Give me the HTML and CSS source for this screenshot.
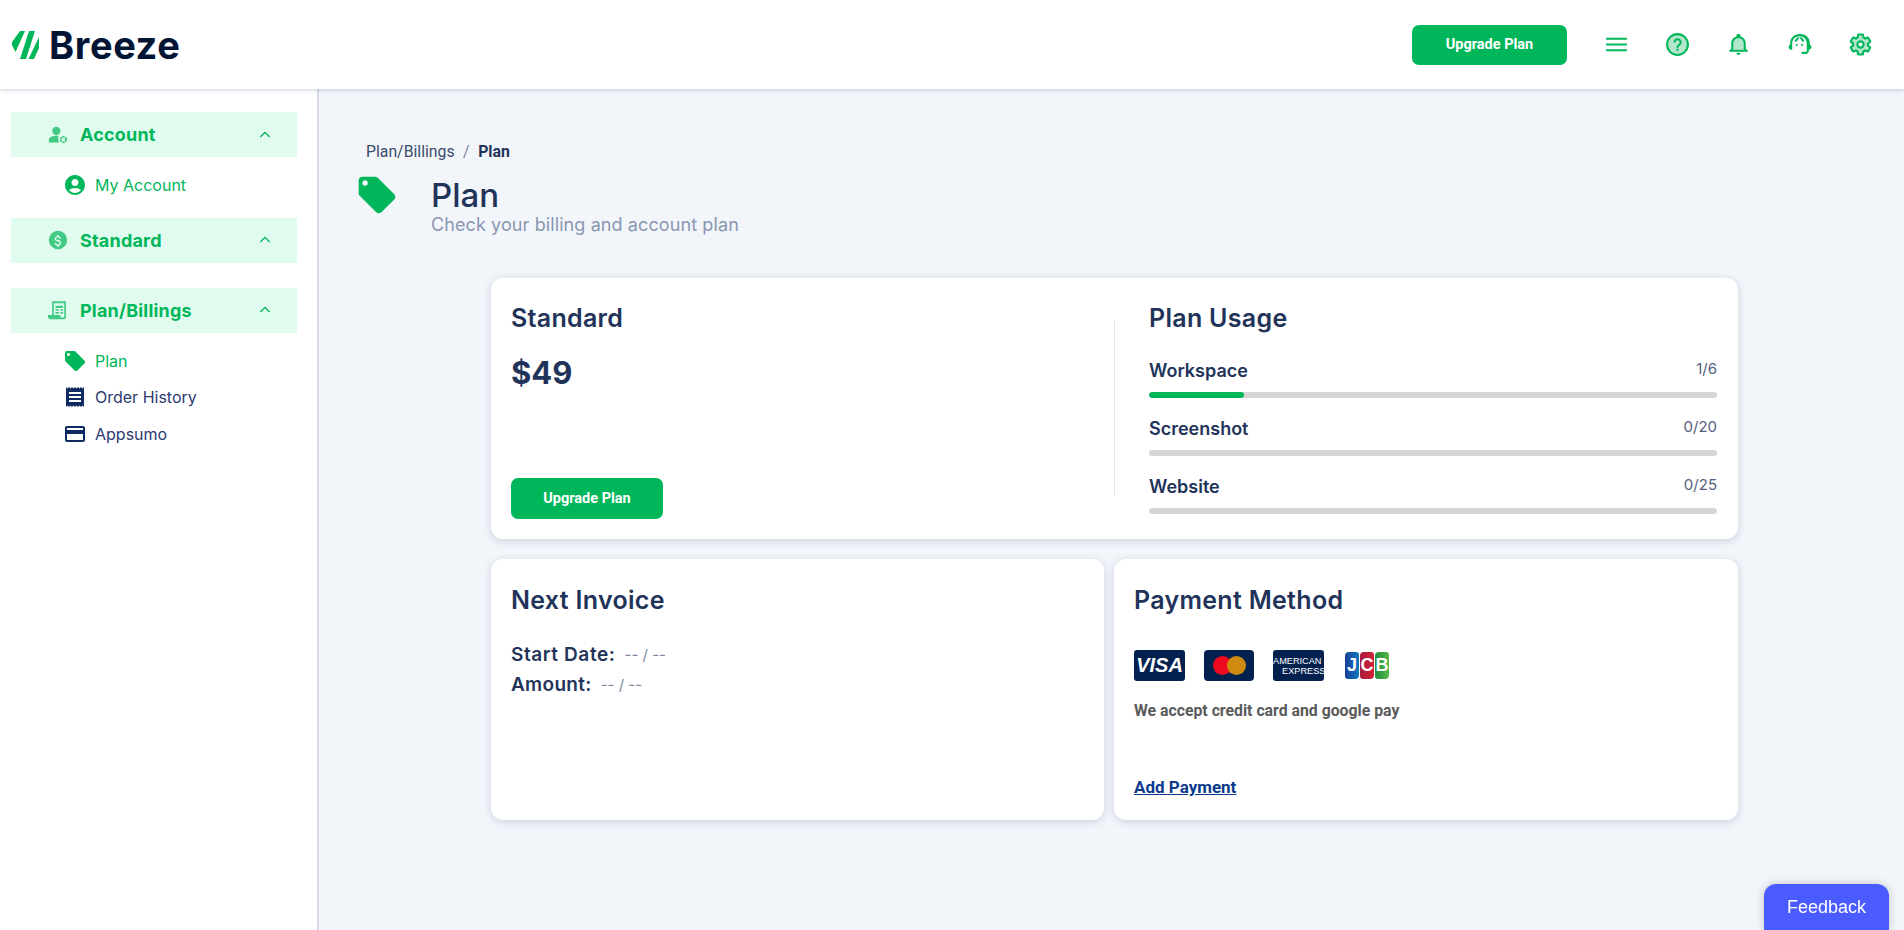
FILE: index.html
```html
<!DOCTYPE html>
<html lang="en">

<head>
    <meta charset="UTF-8">
    <meta name="viewport" content="width=device-width, initial-scale=1.0">
    <title>Breeze - Plan</title>
    <link rel="stylesheet" href="styles.css">
</head>

<body>
    <!-- top bar -->
    <header class="topbar">
        <div class="logo">
            <svg class="logo-mark" viewBox="0 0 27 28">
                <path d="M8 0h5L3.500 21 0 14v-3z" />
                <path d="M17 0h6L14 28H8z" />
                <path d="M27 6v11l-5 11h-5.500z" />
            </svg>
            <span class="logo-text">Breeze</span>
        </div>
        <div class="topbar-right">
            <a class="btn btn-top" href="#">Upgrade Plan</a>
            <div class="top-icons">
                <svg viewBox="0 0 24 24" class="top-icon">
                    <path d="M2 5.500h20v2H2zM2 11h20v2H2zM2 16.500h20v2H2z" />
                </svg>
                <svg viewBox="0 0 24 24" class="top-icon">
                    <circle cx="12" cy="12" r="10" class="soft" />
                    <path d="M12 1a11 11 0 1 0 0 22 11 11 0 0 0 0-22zm0 20a9 9 0 1 1 0-18 9 9 0 0 1 0 18z" />
                    <path d="M11 16h2v2h-2zM12 6a4 4 0 0 0-4 4h2a2 2 0 1 1 4 0c0 2-3 1.800-3 5h2c0-2.300 3-2.500 3-5a4 4 0 0 0-4-4z" />
                </svg>
                <svg viewBox="0 0 24 24" class="top-icon">
                    <path d="M6 17v-6c0-3.500 2.500-6 6-6s6 2.500 6 6v6z" class="soft" />
                    <path d="M12 22c1.100 0 2-.9 2-2h-4c0 1.100.9 2 2 2zm7-6v-5c0-3.300-1.900-6-5-6.800V3.500C14 2.500 13.100 2 12 2s-2 .5-2 1.500v.7C6.900 5 5 7.700 5 11v5l-2 2v1h18v-1zm-2 1H7v-6c0-2.900 2.200-5 5-5s5 2.100 5 5z" />
                </svg>
                <svg viewBox="0 0 24 24" class="top-icon">
                    <path d="M12 2C6.700 2 3 6 3 11v1.200C2 12.600 1.500 13.500 1.500 14.500c0 1.400 1 2.500 2.500 2.500h1v-6c0-4 3-7 7-7s7 3 7 7v7c0 .8-.5 1-1 1h-4v2h4c1.700 0 3-1.300 3-3v-1c1.500 0 2.500-1.100 2.500-2.500 0-1-.5-1.900-1.500-2.300V11c0-5-3.700-9-9-9z" />
                    <path d="M12 5l-2.500 4H7.500V8L10 5zM12 5l2.500 4h2V8L14 5z" />
                    <circle cx="9.500" cy="12.500" r="1" />
                    <circle cx="14.500" cy="12.500" r="1" />
                </svg>
                <svg viewBox="0 0 24 24" class="top-icon">
                    <path class="soft gear" d="M19.140 12.940c.04-.3.06-.61.06-.94 0-.32-.02-.64-.07-.94l2.030-1.580c.18-.14.23-.41.12-.61l-1.920-3.320c-.12-.22-.37-.29-.59-.22l-2.390.96c-.5-.38-1.030-.7-1.620-.94l-.36-2.540c-.04-.24-.24-.41-.48-.41h-3.840c-.24 0-.43.17-.47.41l-.36 2.540c-.59.24-1.130.57-1.620.94l-2.390-.96c-.22-.08-.47 0-.59.22L2.740 8.870c-.12.21-.08.47.12.61l2.030 1.580c-.05.3-.09.63-.09.94s.02.64.07.94l-2.030 1.580c-.18.14-.23.41-.12.61l1.920 3.320c.12.22.37.29.59.22l2.390-.96c.5.38 1.030.7 1.620.94l.36 2.540c.05.24.24.41.48.41h3.840c.24 0 .44-.17.47-.41l.36-2.540c.59-.24 1.130-.56 1.620-.94l2.390.96c.22.08.47 0 .59-.22l1.920-3.320c.12-.22.07-.47-.12-.61z" />
                    <circle class="gear-hole" cx="12" cy="12" r="3" />
                </svg>
            </div>
        </div>
    </header>

    <div class="layout">
        <!-- side menu -->
        <aside class="sidebar">
            <div class="menu-head">
                <svg viewBox="0 0 24 24" class="menu-head-icon">
                    <circle cx="10" cy="7" r="5" />
                    <path d="M1 21v-3c0-3 4-5 9-5 1 0 2 .1 2.500.2-.6 2.500-.2 5.800 1 7.800z" />
                    <circle cx="18.500" cy="17.500" r="3.200" fill="none" stroke="currentColor" stroke-width="2.400" stroke-dasharray="2.500 .9" />
                </svg>
                <span class="menu-title">Account</span>
                <svg viewBox="0 0 24 24" class="chevron"><path d="M5 15l7-7 7 7" /></svg>
            </div>
            <a class="menu-item active" href="#">
                <svg viewBox="0 0 24 24"><path d="M12 2C6.480 2 2 6.480 2 12s4.480 10 10 10 10-4.480 10-10S17.520 2 12 2zm0 4c1.930 0 3.500 1.570 3.500 3.500S13.930 13 12 13s-3.500-1.570-3.500-3.500S10.070 6 12 6zm0 14c-2.030 0-4.430-.82-6.140-2.880C7.550 15.800 9.680 15 12 15s4.450.8 6.140 2.120C16.430 19.180 14.030 20 12 20z" /></svg>
                My Account
            </a>

            <div class="menu-head menu-head-standard">
                <svg viewBox="0 0 24 24" class="menu-head-icon">
                    <path d="M12 1a11 11 0 1 0 0 22 11 11 0 0 0 0-22zm1 17.500V20h-2v-1.500c-1.700-.3-3-1.400-3.200-3h2c.2 1 1 1.500 2.300 1.500 1.400 0 2.100-.6 2.100-1.400 0-.8-.5-1.300-2.500-1.800-2.300-.6-3.700-1.400-3.700-3.300 0-1.500 1.300-2.600 3-3V6.100h2v1.500c1.700.4 2.600 1.700 2.700 3h-2c-.1-1-.7-1.600-2-1.600-1.300 0-2 .6-2 1.400 0 .7.6 1.200 2.500 1.700 2.100.5 3.700 1.300 3.700 3.300 0 1.600-1.200 2.700-2.900 3.100z" />
                </svg>
                <span class="menu-title">Standard</span>
                <svg viewBox="0 0 24 24" class="chevron"><path d="M5 15l7-7 7 7" /></svg>
            </div>

            <div class="menu-head menu-head-billing">
                <svg viewBox="0 0 24 24" class="menu-head-icon">
                    <path d="M5 1l1.500 1L8 1l1.500 1L11 1l1.500 1L14 1l1.500 1L17 1l1.500 1L20 1l1.500 1v18a3 3 0 0 1-3 3H2.500A2.500 2.500 0 0 1 0 20.500V18h5zm2 3v14h8v2.500c0 .2 0 .4.100.5h2.900c.6 0 1.500-.4 1.500-1V4zm2 3h9v2.500H9zm0 4h4v2H9zm6 0h3v2h-3zm-6 3.500h4v2H9zm6 0h3v2h-3z" fill-rule="evenodd" />
                </svg>
                <span class="menu-title">Plan/Billings</span>
                <svg viewBox="0 0 24 24" class="chevron"><path d="M5 15l7-7 7 7" /></svg>
            </div>
            <a class="menu-item active" href="#">
                <svg viewBox="0 0 24 24"><path d="M21.410 11.580l-9-9C12.050 2.220 11.550 2 11 2H4c-1.100 0-2 .9-2 2v7c0 .55.22 1.050.59 1.420l9 9c.36.36.86.58 1.410.58.55 0 1.050-.22 1.410-.59l7-7c.37-.36.59-.86.59-1.410 0-.55-.23-1.060-.59-1.420zM5.500 7C4.670 7 4 6.330 4 5.500S4.670 4 5.500 4 7 4.670 7 5.500 6.330 7 5.500 7z" /></svg>
                Plan
            </a>
            <a class="menu-item" href="#">
                <svg viewBox="0 0 24 24"><path d="M18 17H6v-2h12v2zm0-4H6v-2h12v2zm0-4H6V7h12v2zM3 22l1.500-1.500L6 22l1.500-1.500L9 22l1.500-1.500L12 22l1.500-1.500L15 22l1.500-1.500L18 22l1.500-1.500L21 22V2l-1.500 1.500L18 2l-1.500 1.500L15 2l-1.500 1.500L12 2l-1.500 1.500L9 2 7.500 3.500 6 2 4.500 3.500 3 2v20z" /></svg>
                Order History
            </a>
            <a class="menu-item" href="#">
                <svg viewBox="0 0 24 24"><path d="M20 4H4c-1.110 0-1.990.89-1.990 2L2 18c0 1.110.89 2 2 2h16c1.110 0 2-.89 2-2V6c0-1.110-.89-2-2-2zm0 14H4v-6h16v6zm0-10H4V6h16v2z" /></svg>
                Appsumo
            </a>
        </aside>

        <!-- page content -->
        <main class="content">
            <div class="crumbs">
                <span>Plan/Billings</span>
                <span class="crumb-sep">/</span>
                <b>Plan</b>
            </div>
            <div class="page-head">
                <svg viewBox="0 0 24 24" class="page-icon"><path d="M21.410 11.580l-9-9C12.050 2.220 11.550 2 11 2H4c-1.100 0-2 .9-2 2v7c0 .55.22 1.050.59 1.420l9 9c.36.36.86.58 1.410.58.55 0 1.050-.22 1.410-.59l7-7c.37-.36.59-.86.59-1.410 0-.55-.23-1.060-.59-1.420zM5.500 7C4.670 7 4 6.330 4 5.500S4.670 4 5.500 4 7 4.670 7 5.500 6.330 7 5.500 7z" /></svg>
                <div>
                    <h1>Plan</h1>
                    <p>Check your billing and account plan</p>
                </div>
            </div>

            <div class="cards">
                <section class="card card-plan">
                    <div class="plan-left">
                        <h2>Standard</h2>
                        <div class="price">$49</div>
                        <a class="btn btn-card" href="#">Upgrade Plan</a>
                    </div>
                    <div class="plan-right">
                        <h2>Plan Usage</h2>
                        <div class="usage">
                            <div class="usage-row"><span class="usage-name">Workspace</span><span class="usage-val">1/6</span></div>
                            <div class="bar"><div class="bar-fill" style="width: 16.670%"></div></div>
                        </div>
                        <div class="usage">
                            <div class="usage-row"><span class="usage-name">Screenshot</span><span class="usage-val">0/20</span></div>
                            <div class="bar"></div>
                        </div>
                        <div class="usage">
                            <div class="usage-row"><span class="usage-name">Website</span><span class="usage-val">0/25</span></div>
                            <div class="bar"></div>
                        </div>
                    </div>
                </section>

                <section class="card card-invoice">
                    <h2>Next Invoice</h2>
                    <div class="invoice-line invoice-first"><b>Start Date:</b><span>-- / --</span></div>
                    <div class="invoice-line"><b>Amount:</b><span>-- / --</span></div>
                </section>

                <section class="card card-pay">
                    <h2>Payment Method</h2>
                    <div class="pay-logos">
                        <div class="pay-logo visa">VISA</div>
                        <div class="pay-logo master"><i class="mc-red"></i><i class="mc-orange"></i></div>
                        <div class="pay-logo amex"><span>AMERICAN</span><span class="amex-2">EXPRESS</span></div>
                        <div class="jcb"><span class="jcb-j">J</span><span class="jcb-c">C</span><span class="jcb-b">B</span></div>
                    </div>
                    <p class="pay-note">We accept credit card and google pay</p>
                    <a class="pay-link" href="#">Add Payment</a>
                </section>
            </div>
        </main>
    </div>

    <a class="feedback" href="#">Feedback</a>
</body>

</html>
```

FILE: styles.css
```css
* {
    box-sizing: border-box;
}

html,
body {
    height: 100%;
}

body {
    margin: 0;
    background-color: #f2f5fa;
    color: #22335a;
    font-family: "Roboto", "Liberation Sans", sans-serif;
    overflow: hidden;
}

a {
    text-decoration: none;
}

h1,
h2,
p {
    margin: 0;
}

/* top bar */
.topbar {
    height: 89px;
    background-color: #fff;
    display: flex;
    align-items: center;
    justify-content: space-between;
    padding: 0 31px 0 12px;
    box-shadow: 0 1px 4px rgba(60, 70, 120, 0.25);
    position: relative;
    z-index: 2;
}

.logo {
    display: flex;
    align-items: center;
    gap: 10px;
}

.logo-mark {
    width: 27px;
    height: 28px;
    fill: #00b65a;
}

.logo-text {
    font-family: "Inter", sans-serif;
    font-size: 38px;
    font-weight: 700;
    color: #031535;
    letter-spacing: 0.6px;
}

.topbar-right {
    display: flex;
    align-items: center;
}

.btn {
    display: flex;
    align-items: center;
    justify-content: center;
    background-color: #00b65a;
    color: #fff;
    font-size: 14.500px;
    font-weight: 700;
    border-radius: 7px;
}

.btn-top {
    width: 155px;
    height: 40px;
}

.top-icons {
    display: flex;
    gap: 36px;
    margin-left: 37px;
}

.top-icon {
    width: 25px;
    height: 25px;
    fill: #00b65a;
}

.top-icon .soft {
    fill: #b2e7cc;
}

.top-icon .gear {
    stroke: #00b65a;
    stroke-width: 2;
}

.top-icon .gear-hole {
    fill: #fff;
    stroke: #00b65a;
    stroke-width: 2;
}

.layout {
    display: flex;
    height: calc(100% - 89px);
}

/* side menu */
.sidebar {
    width: 319px;
    flex-shrink: 0;
    background-color: #fff;
    border-right: 2px solid #d5d8e8;
    padding: 23px 20px 0 11px;
}

.menu-head {
    height: 45px;
    background-color: #e0fcee;
    color: #00b65a;
    display: flex;
    align-items: center;
    padding-left: 37px;
    margin-bottom: 10px;
}

.menu-head-standard {
    margin-top: 14px;
    margin-bottom: 25px;
}

.menu-head-billing {
    margin-bottom: 10px;
}

.menu-head-icon {
    width: 20px;
    height: 20px;
    fill: currentColor;
    opacity: 0.7;
    flex-shrink: 0;
    margin-right: 12px;
}

.menu-title {
    font-family: "Inter", sans-serif;
    font-size: 18px;
    font-weight: 700;
    letter-spacing: 0.2px;
    flex: 1;
}

.chevron {
    width: 16px;
    height: 16px;
    fill: none;
    stroke: #00b65a;
    stroke-width: 2;
    margin-right: 24px;
}

.menu-item {
    height: 36.500px;
    display: flex;
    align-items: center;
    padding-left: 52px;
    color: #2c3a72;
    font-family: "Inter", sans-serif;
    font-size: 16px;
}

.menu-item svg {
    width: 24px;
    height: 24px;
    fill: #0f2a60;
    margin-right: 8px;
}

.menu-item.active {
    color: #00b65a;
}

.menu-item.active svg {
    fill: #00b65a;
}

/* page content */
.content {
    flex: 1;
    padding: 53px 166px 0 47px;
}

.crumbs {
    font-size: 15.800px;
    color: #3d4b6c;
    height: 18px;
    display: flex;
    align-items: center;
}

.crumb-sep {
    margin: 0 8.500px;
    color: #7b869d;
}

.crumbs b {
    color: #22335a;
    font-weight: 700;
}

.page-head {
    display: flex;
    margin: 8px 0 0 -11px;
}

.page-icon {
    width: 44px;
    height: 44px;
    fill: #00b65a;
    margin: 5px 32px 0 0;
}

.page-head h1 {
    font-family: "Inter", sans-serif;
    font-size: 33px;
    font-weight: 500;
    line-height: 40px;
    margin-top: 7px;
}

.page-head p {
    font-family: "Inter", sans-serif;
    font-size: 18px;
    letter-spacing: 0.1px;
    line-height: 20px;
    color: #8a97b1;
}

.cards {
    display: grid;
    grid-template-columns: 613px 624px;
    grid-template-rows: 261px 261px;
    gap: 20px 10px;
    margin: 43px 0 0 125px;
}

.card {
    background-color: #fff;
    border-radius: 12px;
    box-shadow: 0 2px 8px rgba(60, 70, 120, 0.2);
    padding: 20px;
}

.card h2 {
    font-family: "Inter", sans-serif;
    font-size: 25px;
    font-weight: 600;
    letter-spacing: 0.3px;
    line-height: 40px;
}

.card-plan {
    grid-column: 1 / 3;
    display: flex;
    padding-right: 21px;
}

.card-invoice h2,
.card-pay h2 {
    margin-top: 1px;
}

.plan-left {
    width: 603px;
    display: flex;
    flex-direction: column;
    align-items: flex-start;
}

.price {
    font-family: "Inter", sans-serif;
    font-size: 31px;
    font-weight: 700;
    margin-top: 16px;
}

.btn-card {
    width: 152px;
    height: 41px;
    margin-top: auto;
}

.plan-right {
    flex: 1;
    position: relative;
    padding-left: 35px;
}

/* vertical line between plan and usage */
.plan-right::before {
    content: "";
    position: absolute;
    left: 0;
    top: 23px;
    height: 175px;
    border-left: 1px solid #e2e4e9;
}

.usage {
    margin-top: 18px;
}

.plan-right h2 + .usage {
    margin-top: 20px;
}

.usage-row {
    display: flex;
    justify-content: space-between;
    align-items: flex-start;
    height: 34px;
}

.usage-name {
    font-family: "Inter", sans-serif;
    font-size: 18px;
    font-weight: 600;
    line-height: 26px;
}

.usage-val {
    font-family: "Inter", sans-serif;
    font-size: 15px;
    line-height: 22px;
    color: #556180;
}

.bar {
    height: 6px;
    border-radius: 3px;
    background-color: #d6d6d6;
    overflow: hidden;
}

.bar-fill {
    height: 100%;
    border-radius: 3px;
    background-color: #00b65a;
}

.invoice-line {
    display: flex;
    gap: 9px;
    align-items: center;
    height: 30px;
    font-family: "Inter", sans-serif;
}

.invoice-first {
    margin-top: 19.500px;
}

.invoice-line b {
    font-size: 19px;
    font-weight: 600;
    letter-spacing: 0.3px;
}

.invoice-first b {
    letter-spacing: 0.6px;
}

.invoice-line span {
    font-size: 15px;
    color: #7c88a1;
}

.card-pay {
    display: flex;
    flex-direction: column;
    align-items: flex-start;
}

.pay-logos {
    display: flex;
    align-items: center;
    gap: 19px;
    margin-top: 30px;
}

.pay-logo {
    width: 51px;
    height: 31px;
    border-radius: 3px;
    background-color: #03214f;
    color: #fff;
    display: flex;
    align-items: center;
    justify-content: center;
}

.visa {
    font-family: "Liberation Sans", sans-serif;
    font-size: 20px;
    font-weight: 700;
    font-style: italic;
}

.master {
    width: 50px;
    border-radius: 4px;
}

.master i {
    width: 19px;
    height: 19px;
    border-radius: 50%;
}

.mc-red {
    background-color: #ee0a1e;
}

.mc-orange {
    background-color: #cf8a10;
    margin-left: -5px;
}

.amex {
    flex-direction: column;
    align-items: flex-start;
    font-family: "Liberation Sans", sans-serif;
    font-size: 9.200px;
    line-height: 10px;
    white-space: nowrap;
}

.amex-2 {
    margin-left: 9px;
}

.jcb {
    display: flex;
    gap: 1px;
    height: 27px;
    margin-left: 2px;
}

.jcb span {
    width: 14px;
    display: flex;
    align-items: center;
    justify-content: center;
    border-radius: 4px 3px;
    color: #fff;
    font-family: "Liberation Sans", sans-serif;
    font-size: 18px;
    font-weight: 700;
}

.jcb-j {
    background: linear-gradient(90deg, #1a3f94, #0f78c0);
}

.jcb-c {
    background: linear-gradient(90deg, #a81c3c, #d22138);
}

.jcb-b {
    background: linear-gradient(90deg, #1d8f3e, #58b947);
}

.pay-note {
    font-size: 15.800px;
    font-weight: 700;
    color: #5a5a5a;
    margin-top: 20px;
}

.pay-link {
    margin-top: auto;
    margin-bottom: 3px;
    font-size: 17px;
    font-weight: 700;
    color: #0b3a8c;
    text-decoration: underline;
}

/* feedback tab, fixed over the page */
.feedback {
    position: fixed;
    right: 15px;
    bottom: 0;
    width: 125px;
    height: 46px;
    display: flex;
    align-items: center;
    justify-content: center;
    background-color: #4a5cff;
    color: #fff;
    font-family: "Liberation Sans", sans-serif;
    font-size: 18px;
    border-radius: 12px 12px 0 0;
    box-shadow: 0 0 10px rgba(0, 0, 0, 0.2);
}
```
